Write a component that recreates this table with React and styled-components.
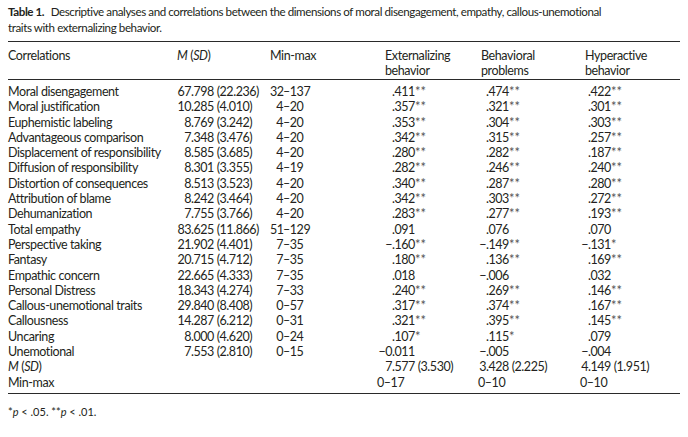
import React from "react";
import styled, { createGlobalStyle } from "styled-components";

const Global = createGlobalStyle`
  html, body { margin: 0; padding: 0; background: #fff; }
  body { font-family: Lato, "Open Sans", sans-serif; color: #231f20; }
`;

const Page = styled.div`
  width: 672px;
  padding: 4px 8px 0;
  font-size: 12.5px;
`;

const Caption = styled.div`
  font-size: 11.6px;
  line-height: 16px;
  letter-spacing: -0.42px;
  white-space: nowrap;
  b { font-weight: 700; margin-right: 4px; }
`;

const Table = styled.div`
  margin-top: 5px;
  border-top: 1px solid #2a2a2a;
  border-bottom: 1px solid #2a2a2a;
`;

const Grid = styled.div`
  display: grid;
  grid-template-columns: 169px 93px 107px 101px 102px 100px;
`;

const Head = styled(Grid)`
  padding: 6px 0 1px;
  line-height: 15px;
  letter-spacing: -0.4px;
  border-bottom: 1px solid #2a2a2a;
`;

const HeadCell = styled.div`
  padding-left: ${(p) => p.$indent || 0}px;
`;

const Body = styled.div`
  padding: 4px 0 3px;
`;

const Row = styled(Grid)`
  line-height: 15.3px;
  white-space: nowrap;
`;

const Label = styled.div`
  letter-spacing: -0.4px;
`;

const Cell = styled.div`
  display: flex;
  letter-spacing: -0.45px;
`;

const Lead = styled.span`
  display: inline-block;
  width: ${(p) => p.$w}px;
  text-align: right;
`;

const Stars = styled.span`
  color: #555;
  font-size: 13px;
  line-height: 0;
  letter-spacing: 0;
`;

const Note = styled.div`
  margin-top: 10px;
  font-size: 11px;
  line-height: 15px;
  i { font-style: italic; }
`;

const cols = [
  { split: ".", w: 14 },
  { split: "–", w: 13 },
  { split: ".", w: 15 },
  { split: ".", w: 8 },
  { split: ".", w: 8 },
];

const rows = [
  ["Moral disengagement", "67.798 (22.236)", "32–137", ".411**", ".474**", ".422**"],
  ["Moral justification", "10.285 (4.010)", "4–20", ".357**", ".321**", ".301**"],
  ["Euphemistic labeling", "8.769 (3.242)", "4–20", ".353**", ".304**", ".303**"],
  ["Advantageous comparison", "7.348 (3.476)", "4–20", ".342**", ".315**", ".257**"],
  ["Displacement of responsibility", "8.585 (3.685)", "4–20", ".280**", ".282**", ".187**"],
  ["Diffusion of responsibility", "8.301 (3.355)", "4–19", ".282**", ".246**", ".240**"],
  ["Distortion of consequences", "8.513 (3.523)", "4–20", ".340**", ".287**", ".280**"],
  ["Attribution of blame", "8.242 (3.464)", "4–20", ".342**", ".303**", ".272**"],
  ["Dehumanization", "7.755 (3.766)", "4–20", ".283**", ".277**", ".193**"],
  ["Total empathy", "83.625 (11.866)", "51–129", ".091", ".076", ".070"],
  ["Perspective taking", "21.902 (4.401)", "7–35", "−.160**", "−.149**", "−.131*"],
  ["Fantasy", "20.715 (4.712)", "7–35", ".180**", ".136**", ".169**"],
  ["Empathic concern", "22.665 (4.333)", "7–35", ".018", "−.006", ".032"],
  ["Personal Distress", "18.343 (4.274)", "7–33", ".240**", ".269**", ".146**"],
  ["Callous-unemotional traits", "29.840 (8.408)", "0–57", ".317**", ".374**", ".167**"],
  ["Callousness", "14.287 (6.212)", "0–31", ".321**", ".395**", ".145**"],
  ["Uncaring", "8.000 (4.620)", "0–24", ".107*", ".115*", ".079"],
  ["Unemotional", "7.553 (2.810)", "0–15", "−0.011", "−.005", "−.004"],
  [<><i>M</i> (<i>SD</i>)</>, "", "", "7.577 (3.530)", "3.428 (2.225)", "4.149 (1.951)"],
  ["Min-max", "", "", "0–17", "0–10", "0–10"],
];

function Value({ text, col }) {
  if (!text) return <Cell />;
  const i = text.indexOf(col.split);
  if (i < 0) return <Cell>{text}</Cell>;
  const rest = text.slice(i);
  const m = rest.match(/^(.*?)(\*+)$/);
  return (
    <Cell>
      <Lead $w={col.w}>{text.slice(0, i)}</Lead>
      {m ? (
        <span>
          {m[1]}
          <Stars>{m[2]}</Stars>
        </span>
      ) : (
        <span>{rest}</span>
      )}
    </Cell>
  );
}

export default function App() {
  return (
    <>
      <Global />
      <Page>
        <Caption>
          <b>Table 1.</b> Descriptive analyses and correlations between the dimensions of moral
          disengagement, empathy, callous-unemotional
          <br />
          traits with externalizing behavior.
        </Caption>
        <Table>
          <Head>
            <HeadCell>Correlations</HeadCell>
            <HeadCell>
              <i>M</i> (<i>SD</i>)
            </HeadCell>
            <HeadCell>Min-max</HeadCell>
            <HeadCell $indent={8}>
              Externalizing
              <br />
              behavior
            </HeadCell>
            <HeadCell $indent={3}>
              Behavioral
              <br />
              problems
            </HeadCell>
            <HeadCell $indent={5}>
              Hyperactive
              <br />
              behavior
            </HeadCell>
          </Head>
          <Body>
            {rows.map((r, ri) => (
              <Row key={ri}>
                <Label>{r[0]}</Label>
                {r.slice(1).map((v, ci) => (
                  <Value key={ci} text={v} col={cols[ci]} />
                ))}
              </Row>
            ))}
          </Body>
        </Table>
        <Note>
          *<i>p</i> &lt; .05. **<i>p</i> &lt; .01.
        </Note>
      </Page>
    </>
  );
}
